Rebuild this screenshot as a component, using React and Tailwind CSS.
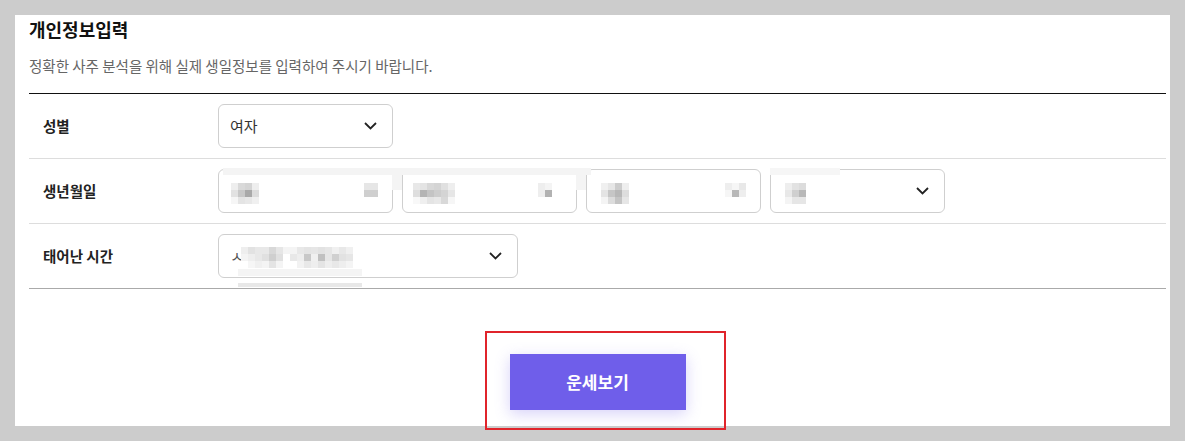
import React from "react";

const font = { fontFamily: '"Noto Sans CJK KR", "Noto Sans", sans-serif' };

function Chevron() {
  return (
    <svg width="13" height="8" viewBox="0 0 13 8" fill="none" className="ml-auto">
      <polyline points="1,1 6.5,6.5 12,1" stroke="#222" strokeWidth="1.8" />
    </svg>
  );
}

function Mosaic({ cells, className }) {
  return (
    <div className={"absolute flex flex-col " + className}>
      {cells.map((row, i) => (
        <div key={i} className="flex">
          {row.map((c, j) => (
            <div key={j} className="w-[7px] h-[7px]" style={{ background: c }} />
          ))}
        </div>
      ))}
    </div>
  );
}

function Field({ children, chevron, w = "w-[175px]" }) {
  return (
    <div className={"relative h-[44px] rounded-[6px] border border-[#cfcfcf] bg-white flex items-center pl-[11px] pr-[15px] " + w}>
      {children}
      {chevron && <Chevron />}
    </div>
  );
}

export default function App() {
  return (
    <div className="relative w-[1185px] h-[441px] bg-[#cccccc] pt-[15px] pl-[15px] pr-[15px]" style={font}>
      <div className="bg-white h-[411px] pl-[14px] pr-[4px]">
        <h2 className="pt-[2px] text-[18px] leading-[25px] font-bold text-[#111]">개인정보입력</h2>
        <p className="mt-[13px] text-[14.5px] leading-[21px] text-[#666]">
          정확한 사주 분석을 위해 실제 생일정보를 입력하여 주시기 바랍니다.
        </p>
        <div className="mt-[17px] border-t border-[#111]">
          <div className="flex items-center h-[65px] border-b border-[#dddddd]">
            <div className="w-[189px] pl-[14px] text-[14.5px] font-bold text-[#222]">성별</div>
            <Field chevron>
              <span className="text-[15px] text-[#333]">여자</span>
            </Field>
          </div>
          <div className="relative flex items-center h-[65px] border-b border-[#dddddd]">
            <div className="w-[189px] pl-[14px] text-[14.5px] font-bold text-[#222]">생년월일</div>
            <div className="flex gap-[9px]">
              <Field>
                <Mosaic className="left-[12px] top-[13px]" cells={[["#eeeeee", "#d9d9d9", "#d4d4d4", "#eeeeee"], ["#e2e2e2", "#c8c8c8", "#a9a9a9", "#dcdcdc"], ["#f6f6f6", "#e4e4e4", "#e8e8e8", "#f0f0f0"]]} />
                <Mosaic className="right-[14px] top-[13px]" cells={[["#e6e6e6", "#e6e6e6"], ["#cfcfcf", "#cfcfcf"]]} />
              </Field>
              <Field>
                <Mosaic className="left-[10px] top-[13px]" cells={[["#e8e8e8", "#e4e4e4", "#d8d8d8", "#d4d4d4", "#e0e0e0", "#eeeeee"], ["#dedede", "#b4b4b4", "#c4c4c4", "#cdcdcd", "#d4d4d4", "#e6e6e6"], ["#f8f8f8", "#efefef", "#e4e4e4", "#e8e8e8", "#d8d8d8", "#f6f6f6"]]} />
                <Mosaic className="right-[24px] top-[13px]" cells={[["#eeeeee", "#f4f4f4"], ["#eeeeee", "#b2b2b2"]]} />
              </Field>
              <Field>
                <Mosaic className="left-[14px] top-[13px]" cells={[["#f0f0f0", "#e6e6e6", "#cccccc", "#eeeeee"], ["#e4e4e4", "#c6c6c6", "#b8b8b8", "#dddddd"], ["#f4f4f4", "#dcdcdc", "#c4c4c4", "#e6e6e6"]]} />
                <Mosaic className="right-[14px] top-[13px]" cells={[["#eeeeee", "#f6f6f6", "#e8e8e8"], ["#f6f6f6", "#b8b8b8", "#eeeeee"]]} />
              </Field>
              <Field chevron>
                <Mosaic className="left-[14px] top-[13px]" cells={[["#eeeeee", "#e2e2e2", "#dcdcdc"], ["#e8e8e8", "#cfcfcf", "#b8b8b8"], ["#f4f4f4", "#e6e6e6", "#e6e6e6"]]} />
              </Field>
            </div>
            <div className="absolute left-[194px] top-[9px] w-[368px] h-[7px] bg-[#f4f4f4]" />
            <div className="absolute left-[363px] top-[9px] w-[10px] h-[22px] bg-[#f4f4f4]" />
            <div className="absolute left-[547px] top-[9px] w-[10px] h-[22px] bg-[#f4f4f4]" />
            <div className="absolute left-[741px] top-[9px] w-[70px] h-[7px] bg-[#f6f6f6]" />
          </div>
          <div className="relative flex items-center h-[65px] border-b border-[#aaaaaa]">
            <div className="w-[189px] pl-[14px] text-[14.5px] font-bold text-[#222]">태어난 시간</div>
            <Field chevron w="w-[300px]">
              <span className="text-[15px] text-[#555]">ㅅ</span>
              <Mosaic className="left-[22px] top-[12px]" cells={[["#eeeeee", "#e2e2e2", "#e8e8e8", "#e8e8e8", "#d8d8d8", "#e6e6e6", "#f4f4f4", "#f4f4f4", "#e8e8e8", "#e4e4e4", "#e6e6e6", "#e2e2e2", "#e6e6e6", "#f0f0f0", "#e8e8e8", "#f0f0f0"], ["#f4f4f4", "#eeeeee", "#e8e8e8", "#e0e0e0", "#cfcfcf", "#e0e0e0", "#ffffff", "#e8e8e8", "#eeeeee", "#c8c8c8", "#f0f0f0", "#c0c0c0", "#e6e6e6", "#d0d0d0", "#e2e2e2", "#e6e6e6"], ["#ffffff", "#f6f6f6", "#f0f0f0", "#f4f4f4", "#e4e4e4", "#f4f4f4", "#ffffff", "#ffffff", "#f2f2f2", "#e8e8e8", "#eeeeee", "#e4e4e4", "#eeeeee", "#e8e8e8", "#eeeeee", "#f4f4f4"]]} />
            </Field>
            <div className="absolute left-[209px] top-[45px] w-[124px] h-[7px] bg-[#f4f4f4]" />
            <div className="absolute left-[209px] top-[59px] w-[124px] h-[4px] bg-[#e8e8e8]" />
          </div>
        </div>
        <div className="flex justify-center mt-[65px]">
          <button className="w-[176px] h-[56px] bg-[#6f5eea] text-white text-[17px] font-bold shadow-[0_4px_14px_rgba(111,94,234,0.28)]">
            운세보기
          </button>
        </div>
      </div>
      <div className="absolute left-[485px] top-[331px] w-[241px] h-[99px] border-2 border-[#e0242b]" />
    </div>
  );
}
